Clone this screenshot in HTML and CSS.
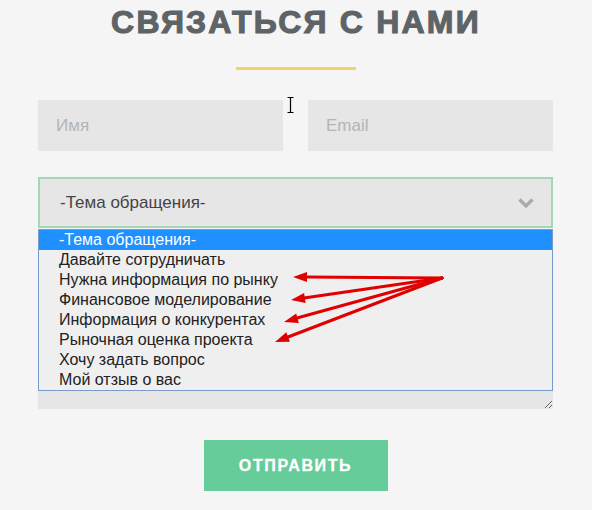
FILE: index.html
```html
<!DOCTYPE html>
<html>
<head>
    <title>Связаться с нами</title>
    <meta charset="utf-8"/>
    <link rel="stylesheet" href="styles.css">
</head>
<body>
<div class="page">
    <h1 class="title">СВЯЗАТЬСЯ С НАМИ</h1>
    <div class="title-line"></div>
    <form class="form">
        <div class="row">
            <input class="field" type="text" placeholder="Имя">
            <input class="field" type="text" placeholder="Email">
        </div>
        <div class="select-wrap">
            <div class="select">
                <span>-Тема обращения-</span>
                <svg class="chevron" width="16" height="10" viewBox="0 0 16 10">
                    <polyline points="1.5,1.5 8,8 14.5,1.5" fill="none" stroke="#a9a9a9" stroke-width="3.2"/>
                </svg>
            </div>
            <ul class="options">
                <li class="active">-Тема обращения-</li>
                <li>Давайте сотрудничать</li>
                <li>Нужна информация по рынку</li>
                <li>Финансовое моделирование</li>
                <li>Информация о конкурентах</li>
                <li>Рыночная оценка проекта</li>
                <li>Хочу задать вопрос</li>
                <li>Мой отзыв о вас</li>
            </ul>
        </div>
        <textarea class="message"></textarea>
        <button class="send" type="button">ОТПРАВИТЬ</button>
    </form>
</div>
<!-- annotation arrows and mouse cursor drawn over the page -->
<svg class="marks" width="592" height="510" viewBox="0 0 592 510">
    <g stroke="#e00000" stroke-width="3" stroke-linecap="round" fill="none">
        <line x1="442" y1="278" x2="306" y2="277"/>
        <line x1="442" y1="278" x2="304" y2="298"/>
        <line x1="442" y1="278" x2="297" y2="318"/>
        <line x1="442" y1="278" x2="288" y2="337"/>
    </g>
    <g fill="#e00000">
        <polygon points="293,277 307,272 307,282"/>
        <polygon points="291,300 305.6,302.9 304.1,293"/>
        <polygon points="284,322 298.8,323.1 296.2,313.4"/>
        <polygon points="275,342 289.9,341.7 286.3,332.3"/>
    </g>
    <path d="M287.5 97.5h6M290.5 97.5v15M287.5 112.5h6" stroke="#000" stroke-width="1.2" fill="none"/>
</svg>
</body>
</html>
```

FILE: styles.css
```css
body {
    margin: 0;
    background-color: #f5f5f5;
    font-family: "Liberation Sans", Arial, sans-serif;
}

.page {
    padding: 4px 38px 0 38px;
}

.title {
    margin: 0;
    text-align: center;
    font-size: 32px;
    line-height: 36px;
    font-weight: 900;
    letter-spacing: 2.2px;
    color: #5d6366;
    -webkit-text-stroke: 1.1px #5d6366;
}

.title-line {
    width: 120px;
    height: 3px;
    margin: 27px auto 0;
    background-color: #f0d36c;
}

.form {
    margin-top: 30px;
    width: 515px;
}

.row {
    display: flex;
    gap: 25px;
}

.field {
    flex: 1;
    min-width: 0;
    height: 51px;
    box-sizing: border-box;
    padding: 0 18px;
    border: none;
    background-color: #e6e6e6;
    font-family: "Liberation Sans", Arial, sans-serif;
    font-size: 17px;
    outline: none;
}

.field::placeholder {
    color: #b4b4b4;
}

.select-wrap {
    position: relative;
    margin-top: 26px;
}

.select {
    display: flex;
    align-items: center;
    justify-content: space-between;
    height: 51px;
    box-sizing: border-box;
    padding: 0 17px 0 20px;
    border: 2px solid #a6d6b8;
    background-color: #e6e6e6;
    font-size: 17px;
    color: #444;
}

.chevron {
    margin-top: 1px;
}

.options {
    position: absolute;
    top: 52px;
    left: 0;
    right: 0;
    margin: 0;
    padding: 0;
    list-style: none;
    border: 1px solid #7b9ccb;
    background-color: #efefef;
    font-size: 16px;
    line-height: 20px;
    color: #222;
    z-index: 2;
}

.options li {
    padding-left: 20px;
}

.options li.active {
    background-color: #1e90ff;
    color: #fff;
}

.message {
    display: block;
    width: 100%;
    height: 157px;
    box-sizing: border-box;
    margin-top: 24px;
    border: none;
    background-color: #e6e6e6;
}

.send {
    display: block;
    width: 184px;
    height: 51px;
    margin: 31px auto 0;
    border: none;
    background-color: #66cc99;
    color: #fff;
    font-family: "Liberation Sans", Arial, sans-serif;
    font-size: 16px;
    font-weight: bold;
    letter-spacing: 1.6px;
    -webkit-text-stroke: 0.3px #fff;
    cursor: pointer;
}

.marks {
    position: absolute;
    top: 0;
    left: 0;
    pointer-events: none;
    z-index: 3;
}
```
